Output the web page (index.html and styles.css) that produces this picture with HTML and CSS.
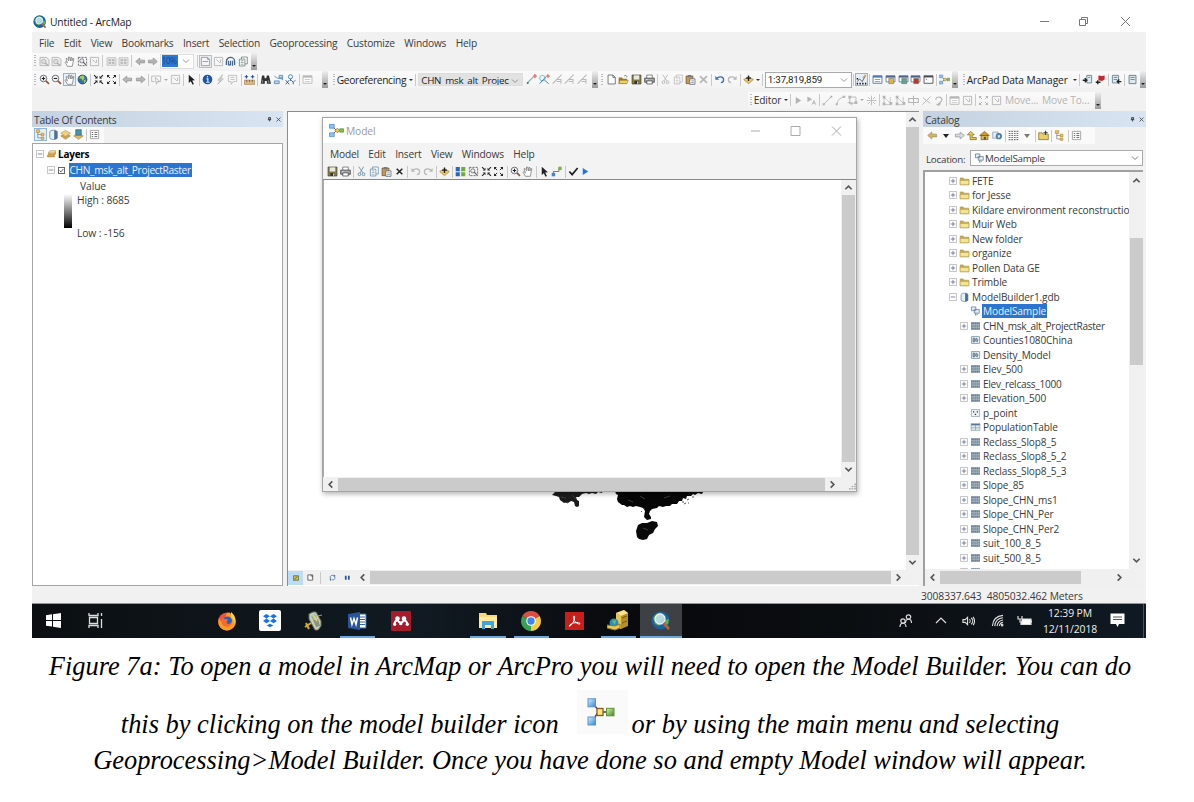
FILE: index.html
```html
<!DOCTYPE html>
<html lang="en">
<head>
<meta charset="utf-8">
<title>Untitled - ArcMap</title>
<link rel="stylesheet" href="styles.css">
</head>
<body>
<svg class="defs" xmlns="http://www.w3.org/2000/svg">
<defs>
<symbol id="zin" viewBox="0 0 16 16"><circle cx="6.500" cy="6.500" r="4.800" fill="#eef4fa" stroke="#666" stroke-width="1.300"/><path d="M4 6.500h5M6.500 4v5" stroke="#222" stroke-width="1.500"/><path d="M10 10l4.500 4.500" stroke="#8a5a44" stroke-width="2.600"/></symbol>
<symbol id="zout" viewBox="0 0 16 16"><circle cx="6.500" cy="6.500" r="4.800" fill="#eef4fa" stroke="#666" stroke-width="1.300"/><path d="M4 6.500h5" stroke="#222" stroke-width="1.500"/><path d="M10 10l4.500 4.500" stroke="#8a5a44" stroke-width="2.600"/></symbol>
<symbol id="hand" viewBox="0 0 16 16"><path d="M5 15L1.500 9l1-1L5 10 3 4l1.500-.5L7 7 6.500 1.500h1.700L9.500 7l.5-5 1.500.3L11.500 7l1.500-3.500 1.300.5L13 10l-1 5z" fill="#fff" stroke="#777" stroke-width="1.100"/></symbol>
<symbol id="globe" viewBox="0 0 16 16"><circle cx="8" cy="8" r="6.500" fill="#2c72b8" stroke="#234"/><path d="M5 3l5-1 1 4-3 4-1-3-4-1zM10 9l3-1-1 4-2 1z" fill="#a5cf52"/></symbol>
<symbol id="arin" viewBox="0 0 16 16"><path d="M1.500 1.500l3 3M14.500 1.500l-3 3M1.500 14.500l3-3M14.500 14.500l-3-3" stroke="currentColor" stroke-width="1.600"/><path d="M6.500 2.500v4h-4zM9.500 2.500v4h4zM6.500 13.500v-4h-4zM9.500 13.500v-4h4z" fill="currentColor"/></symbol>
<symbol id="arout" viewBox="0 0 16 16"><path d="M6 6L3 3M10 6l3-3M6 10l-3 3M10 10l3 3" stroke="currentColor" stroke-width="1.400"/><path d="M1.500 1.500h4l-4 4zM14.500 1.500h-4l4 4zM1.500 14.500h4l-4-4zM14.500 14.500h-4l4-4z" fill="currentColor"/></symbol>
<symbol id="left" viewBox="0 0 16 16"><path d="M1 8l6-5v3h7v4H7v3z" fill="currentColor" stroke="#888" stroke-width=".9"/></symbol>
<symbol id="right" viewBox="0 0 16 16"><path d="M15 8L9 3v3H2v4h7v3z" fill="currentColor" stroke="#888" stroke-width=".9"/></symbol>
<symbol id="self" viewBox="0 0 16 16"><path d="M1 3h13v8H9M1 3v8h4M6 5l7 6-4 .5L8 15z" fill="none" stroke="currentColor" stroke-width="1.300"/></symbol>
<symbol id="clr" viewBox="0 0 16 16"><path d="M2 2h12v12H2zM5 5l5 5M11 5v5" fill="none" stroke="currentColor" stroke-width="1.300"/></symbol>
<symbol id="ptr" viewBox="0 0 16 16"><path d="M4 1l9 8-4 .5 2.500 5-2 1-2.500-5L4 13z" fill="currentColor"/></symbol>
<symbol id="info" viewBox="0 0 16 16"><circle cx="8" cy="8" r="7" fill="#1c57a8"/><path d="M8 3v2M6.500 7H8.500v5M6 12h5" stroke="#dce9f8" stroke-width="1.700" fill="none"/></symbol>
<symbol id="bolt" viewBox="0 0 16 16"><path d="M11 1L4 9h4l-4 6 8-8H8z" fill="#ddd" stroke="#aaa"/></symbol>
<symbol id="call" viewBox="0 0 16 16"><path d="M2 2h12v9H9l-3 4v-4H2zM5 5h6M5 8h6" fill="none" stroke="currentColor" stroke-width="1.200"/></symbol>
<symbol id="meas" viewBox="0 0 16 16"><path d="M1 4h5M10 4h5" stroke="#244f94" stroke-width="1.500"/><path d="M3.500 1.500v5M12.500 1.500v5" stroke="#244f94" stroke-width="1.500"/><path d="M.5 9h15v6H.5z" fill="#dcbf92" stroke="#a07a45"/><path d="M4 9v3M8 9v3M12 9v3" stroke="#543"/></symbol>
<symbol id="bino" viewBox="0 0 16 16"><path d="M3 2h3l1 4h2l1-4h3l3 12h-6v-4H7v4H1z" fill="#333"/><path d="M4 9l-1 4M12 9l1 4" stroke="#bbb"/></symbol>
<symbol id="route" viewBox="0 0 16 16"><path d="M2 10h7v4H2zM6 6h8v3M9 2h5v4H9zM2 3l4 3" fill="#bdd7ee" stroke="#5a87b2" stroke-width="1.200"/></symbol>
<symbol id="xy" viewBox="0 0 16 16"><circle cx="8" cy="4" r="3" fill="none" stroke="#4e85bf" stroke-width="1.400"/><path d="M8 7v3M1 9l5 6M6 9l-5 6M9 9l3 3 3-3M12 12v3" fill="none" stroke="#28578f" stroke-width="1.300"/></symbol>
<symbol id="win" viewBox="0 0 16 16"><path d="M1.500 2.500h13v11h-13z" fill="#fff" stroke="currentColor" stroke-width="1.300"/><path d="M1.500 4h13" stroke="currentColor" stroke-width="2.500"/><path d="M4 8h8M4 11h8" stroke="currentColor"/></symbol>
<symbol id="page" viewBox="0 0 16 16"><path d="M3 1.500h7l3.500 3.500v9.500H3zM10 1.500V5h3.500" fill="#fff" stroke="currentColor" stroke-width="1.300"/></symbol>
<symbol id="layout" viewBox="0 0 16 16"><path d="M2 2h9l3 3v9H2zM11 2v3h3M4 8h8" fill="#f4f4f4" stroke="currentColor" stroke-width="1.300"/></symbol>
<symbol id="pagez" viewBox="0 0 16 16"><path d="M1.500 2h9l4 3v9h-13z" fill="#eee" stroke="currentColor" stroke-width="1.300"/><circle cx="7" cy="8" r="3.300" fill="#ddd" stroke="currentColor" stroke-width="1.300"/><path d="M9 10l4 4" stroke="currentColor" stroke-width="2.300"/></symbol>
<symbol id="grid4" viewBox="0 0 16 16"><path d="M1.500 2.500h13v11h-13z" fill="#eee" stroke="currentColor" stroke-width="1.100"/><path d="M4 5h3v2H4zM9 5h3v2H9zM4 9h3v2H4zM9 9h3v2H9z" fill="currentColor" stroke="currentColor"/></symbol>
<symbol id="open" viewBox="0 0 16 16"><path d="M1 5h5l1 2h6v7H1z" fill="#9b7a25"/><path d="M3 9h12l-2 5H1z" fill="#f0d264" stroke="#8a6f20" stroke-width=".8"/><path d="M9 3c2-2 4-1 4 2" stroke="#456" fill="none"/></symbol>
<symbol id="save" viewBox="0 0 16 16"><path d="M1.500 1.500h13v13h-13z" fill="#8a7c48" stroke="#454026"/><path d="M4 2h8v6H4z" fill="#e8e8e0"/><path d="M5 10h6v4.500H5z" fill="#333"/><path d="M9 11h1.500v3H9z" fill="#fff"/></symbol>
<symbol id="print" viewBox="0 0 16 16"><path d="M4 6V1.500h8V6" fill="#fff" stroke="#555"/><path d="M1 6h14v6H1z" fill="#aaa" stroke="#444" stroke-width="1.200"/><path d="M4 10h8v4.500H4z" fill="#fff" stroke="#333"/><path d="M3 8h2" stroke="#fff"/></symbol>
<symbol id="cut" viewBox="0 0 16 16"><path d="M4 1l6 9M11 1L6 10" stroke="currentColor" stroke-width="1.300"/><circle cx="5" cy="12" r="2" fill="none" stroke="currentColor" stroke-width="1.400"/><circle cx="11" cy="12" r="2" fill="none" stroke="currentColor" stroke-width="1.400"/></symbol>
<symbol id="copy" viewBox="0 0 16 16"><path d="M5 1.500h8.500v10H5z" fill="#fff" stroke="currentColor" stroke-width="1.200"/><path d="M2 4.500h8v10H2z" fill="#fff" stroke="currentColor" stroke-width="1.200"/><path d="M4 7h4M4 9.500h4M4 12h4" stroke="currentColor"/></symbol>
<symbol id="paste" viewBox="0 0 16 16"><path d="M1.500 3h10v11h-10z" fill="#c19a5b" stroke="#6c4c24"/><path d="M4 1.500h5v3H4z" fill="#777"/><path d="M7 7h7.500v8H7z" fill="#fff" stroke="#456"/><path d="M9 10h4M9 12.500h4" stroke="#678"/></symbol>
<symbol id="x" viewBox="0 0 16 16"><path d="M3 3l10 10M13 3L3 13" stroke="currentColor" stroke-width="2.600"/></symbol>
<symbol id="undo" viewBox="0 0 16 16"><path d="M2 3v5.500h5.500z" fill="currentColor"/><path d="M4 7C6 3 14 3 14 8.500c0 2.500-2 4-4 4" fill="none" stroke="currentColor" stroke-width="1.800"/></symbol>
<symbol id="redo" viewBox="0 0 16 16"><path d="M14 3v5.500H8.500z" fill="currentColor"/><path d="M12 7C10 3 2 3 2 8.500c0 2.500 2 4 4 4" fill="none" stroke="currentColor" stroke-width="1.800"/></symbol>
<symbol id="add" viewBox="0 0 16 16"><path d="M1 8l7-4 7 4-7 6z" fill="#f2c95c" stroke="#a17a24"/><path d="M8 2v8M4.500 6h7" stroke="#222" stroke-width="2"/></symbol>
<symbol id="edit" viewBox="0 0 16 16"><path d="M2 11l3-4 4 4 5-9" fill="none" stroke="#555" stroke-width="1.300"/><path d="M10 6l4-5" stroke="#d7a93b" stroke-width="2"/><path d="M1 14h2M5 14h2M9 14h2M13 14h2M1 7h2" stroke="#111" stroke-width="2.200"/></symbol>
<symbol id="mb" viewBox="0 0 16 16"><path d="M4 4l4 4-4 4M8 8h5" stroke="#555" fill="none"/><path d="M.5 1.500h5v4h-5zM.5 10.500h5v4h-5z" fill="#8fc1f2" stroke="#5f9bd3"/><path d="M9 5.500L11 8l-2 2.500L6.500 8z" fill="#f3cf4d" stroke="#93752a" stroke-width=".8"/><path d="M11.500 6.200h4v3.500h-4z" fill="#87bd54" stroke="#6a9f45"/></symbol>
<symbol id="wint" viewBox="0 0 16 16"><path d="M1.500 2.500h13v9h-13z" fill="#fff" stroke="#5e7394" stroke-width="1.200"/><path d="M1.500 4h13" stroke="#4c6387" stroke-width="2.500"/><path d="M5.500 6.500h7v7.500h-7z" fill="currentColor" stroke="#666" stroke-width=".8"/></symbol>
<symbol id="wincmd" viewBox="0 0 16 16"><path d="M1.500 2.500h13v11h-13z" fill="#fff" stroke="#444" stroke-width="1.200"/><path d="M1.500 4h13" stroke="#444" stroke-width="2"/><path d="M4 7l2 1.500" stroke="#444"/></symbol>
<symbol id="tri" viewBox="0 0 16 16"><path d="M4 3l8 5-8 5z" fill="currentColor"/></symbol>
<symbol id="tria" viewBox="0 0 16 16"><path d="M2 2l7 4-7 4z" fill="currentColor"/><path d="M9 14l2.500-6 2.500 6M10 12h3" fill="none" stroke="currentColor" stroke-width="1.300"/></symbol>
<symbol id="line" viewBox="0 0 16 16"><path d="M2 14L14 2" stroke="currentColor" stroke-width="1.300"/><path d="M1 12h3v3H1zM12 1h3v3h-3z" fill="currentColor"/></symbol>
<symbol id="curve" viewBox="0 0 16 16"><path d="M3 14C3 8 7 4 13 3" fill="none" stroke="currentColor" stroke-width="1.300"/><path d="M1 12h3v3H1zM11 1h4v3h-4z" fill="currentColor"/></symbol>
<symbol id="poly" viewBox="0 0 16 16"><path d="M4 3h9v8l-9 2zM1 11h6v4" fill="none" stroke="currentColor" stroke-width="1.300"/><path d="M2 1h4v4H2zM11 9h4v4h-4z" fill="currentColor"/></symbol>
<symbol id="spark" viewBox="0 0 16 16"><path d="M8 1v14M1 8h14M3 3l3 3M13 3l-3 3M3 13l3-3M13 13l-3-3" stroke="currentColor" stroke-width="1.200"/></symbol>
<symbol id="nodes" viewBox="0 0 16 16"><path d="M3 2v12h11M3 3l9 9V3" fill="none" stroke="currentColor"/><path d="M1 1h4v4H1zM1 11h4v4H1zM11 10h4v4h-4z" fill="currentColor"/></symbol>
<symbol id="cross" viewBox="0 0 16 16"><path d="M8 1v14M1 5h14v6H1z" fill="none" stroke="currentColor" stroke-width="1.500"/></symbol>
<symbol id="xthin" viewBox="0 0 16 16"><path d="M2 14L14 2M3 4l10 8" stroke="currentColor" stroke-width="1.300"/></symbol>
<symbol id="rot" viewBox="0 0 16 16"><path d="M4 7c0-6 9-5 9 0 0 4-5 3-5 7M5 13l3 2 3-3" fill="none" stroke="currentColor" stroke-width="1.700"/></symbol>
<symbol id="ref" viewBox="0 0 16 16"><path d="M4 12C0 5 6 1 11 4M12 4c4 6 0 11-5 9" fill="none" stroke="currentColor" stroke-width="1.800"/><path d="M11 1v6l4-3zM5 10v6l-4-3z" fill="currentColor"/></symbol>
<symbol id="home2" viewBox="0 0 16 16"><path d="M2 13V8c0-8 12-8 12 0v5M5 7v6h3V7M11 7v7" fill="none" stroke="currentColor" stroke-width="1.900"/></symbol>
<symbol id="ctrl" viewBox="0 0 16 16"><path d="M2 13L11 4" stroke="#5fb093" stroke-width="1.500"/><circle cx="2.500" cy="13" r="1.500" fill="#2a8459"/><path d="M13 0v6M10 3h6" stroke="#dc5b53" stroke-width="1.600"/></symbol>
<symbol id="ctrl2" viewBox="0 0 16 16"><circle cx="5" cy="6" r="4" fill="none" stroke="#6bb3da" stroke-width="1.300"/><path d="M1 14L10 4M8 9l6 5" stroke="#477dad" stroke-width="1.400"/><path d="M13 0v6M10 3h6" stroke="#dc5b53" stroke-width="1.400"/></symbol>
<symbol id="lnk" viewBox="0 0 16 16"><path d="M1 14L14 1M6 8h7v6M7 11h5" fill="none" stroke="currentColor" stroke-width="1.500"/></symbol>
<symbol id="dev" viewBox="0 0 16 16"><path d="M7 2h7v11H7z" fill="#dce9ef" stroke="#688392" stroke-width="1.300"/><path d="M9 5h3" stroke="#486372"/><path d="M1 9h6M4 6l3 3-3 3" stroke="#222" stroke-width="2" fill="none"/></symbol>
<symbol id="devd" viewBox="0 0 16 16"><path d="M2 2h9v11H2z" fill="#dce9ef" stroke="#688392" stroke-width="1.300"/><path d="M4 5h5M4 8h5" stroke="#486372"/><path d="M15 11H9M12 8l-3 3 3 3" stroke="#222" stroke-width="1.800" fill="none"/></symbol>
<symbol id="devr" viewBox="0 0 16 16"><path d="M5 2l5 1 4-1v6l-4 2-5-1z" fill="#c8272c"/><path d="M1 12h7M4 9v6" stroke="#222" stroke-width="2"/></symbol>
<symbol id="dev1" viewBox="0 0 16 16"><path d="M3 2h10v12H3z" fill="#dce9ef" stroke="#688392" stroke-width="1.400"/><path d="M5 5h6M5 8h6" stroke="#486372"/></symbol>
<symbol id="tree" viewBox="0 0 16 16"><path d="M4 4v9h6M4 8h6" stroke="#777" fill="none"/><path d="M2 1h5v4H2zM9 6h4v4H9zM9 12h4v3H9z" fill="#eac15a" stroke="#a5802b" stroke-width=".8"/></symbol>
<symbol id="cyl" viewBox="0 0 16 16"><path d="M2.500 4c1-3 10-3 11 0v9c-1 3-10 3-11 0z" fill="#e8f1f8" stroke="#6d88a6" stroke-width="1.200"/><path d="M9 2c3 0 4.500 1 4.500 2v9c0 1-2 2-4.500 2z" fill="#4a6f9a"/></symbol>
<symbol id="layer" viewBox="0 0 16 16"><path d="M1 10l7-4 7 4-7 5z" fill="#cfa75c" stroke="#8f6c2e" stroke-width=".7"/><path d="M1 6l7-4 7 4-7 5z" fill="#f5d07b" stroke="#a47e37" stroke-width=".7"/></symbol>
<symbol id="layers" viewBox="0 0 18 16"><path d="M2 11l3-4h12l-3 4v3H2z" fill="#dba64e" stroke="#a87a30"/><path d="M3 7l3-4h11l-3 4zM3 9h11l3-4" fill="#f9e2a0" stroke="#b08638"/></symbol>
<symbol id="lsel" viewBox="0 0 16 16"><path d="M1 10l7-4 7 4-7 5z" fill="#e0b963" stroke="#8f6c2e" stroke-width=".7"/><path d="M4 1h8v8H4z" fill="#4a93a8" stroke="#345d84"/></symbol>
<symbol id="opts" viewBox="0 0 16 16"><path d="M2 2h12v12H2z" fill="#fff" stroke="#999" stroke-width="1.200"/><path d="M4 5h2M8 5h4M4 8h2M8 8h4M4 11h2M8 11h4" stroke="#666" stroke-width="1.400"/></symbol>
<symbol id="up" viewBox="0 0 16 16"><path d="M6 14V7H2l5-5 5 5H9v4h6v3z" fill="#f0cc57" stroke="#6d5b23"/></symbol>
<symbol id="home" viewBox="0 0 16 16"><path d="M3 8h10v6H3z" fill="#e0b54a" stroke="#6d5b23"/><path d="M1 8l7-6 7 6z" fill="#d29a2d" stroke="#6d5b23"/><path d="M7 10h3v4H7z" fill="#554"/></symbol>
<symbol id="conn" viewBox="0 0 16 16"><path d="M1 3h8v9H1z" fill="#e4ebf1" stroke="#8192a2"/><circle cx="10" cy="9" r="4.500" fill="#4b7da8"/><path d="M8 8l3-1 1 3-3 2z" fill="#dde6c0"/></symbol>
<symbol id="dots" viewBox="0 0 16 16"><path d="M1 2h14M1 5h14M1 8h14M1 11h14M1 14h14" stroke="#777" stroke-width="1.500" stroke-dasharray="2.500 1.300"/></symbol>
<symbol id="folder" viewBox="0 0 16 16"><path d="M1 3h5l1 2h8v9H1z" fill="#c6ab4b" stroke="#a6914b" stroke-width=".8"/><path d="M1 7h14v7H1z" fill="#f4e391" stroke="#a6914b" stroke-width=".8"/></symbol>
<symbol id="fold2" viewBox="0 0 16 16"><path d="M1 4h5l1 2h8v8H1z" fill="#e9cf69" stroke="#7e6b29"/><path d="M11 1v6M8 4h6" stroke="#333" stroke-width="1.500"/></symbol>
<symbol id="raster" viewBox="0 0 16 16"><path d="M1 2h14v12H1z" fill="#5e7184"/><path d="M1 5.500h14M1 8h14M1 10.500h14M4 2v12M7 2v12M10 2v12M13 2v12" stroke="#c5d0da" stroke-width=".8"/></symbol>
<symbol id="fc" viewBox="0 0 16 16"><path d="M1.500 2.500h13v11h-13z" fill="#edf2f6" stroke="#7f92a3" stroke-width="1.300"/><path d="M4 5h3v6H4zM9 5l3 2-1 4-3-2z" fill="#9eb2c2" stroke="#455d72"/></symbol>
<symbol id="pt" viewBox="0 0 16 16"><path d="M1.500 2.500h13v11h-13z" fill="#edf2f6" stroke="#8c9dac" stroke-width="1.200"/><path d="M4 5h2v2H4zM10 5h2v2h-2zM7 9h2v2H7z" fill="#234"/></symbol>
<symbol id="tbl" viewBox="0 0 16 16"><path d="M1 2.500h14v11H1zM1 6h14M1 8.500h14M1 11h14M8 5v8" fill="#fff" stroke="#7893ac"/><path d="M1 3h14v2H1z" fill="#587895"/></symbol>
<symbol id="ms" viewBox="0 0 16 16"><path d="M1.500 1.500h7v6h-7zM6 5.500h8v6H6z" fill="#e5edf4" stroke="#5e7a97" stroke-width="1.200"/><path d="M8 11v4l4-2" fill="none" stroke="#5e7a97"/></symbol>
<symbol id="auto" viewBox="0 0 16 16"><path d="M1 1.500h6v6H1zM1 9h6v6H1z" fill="#2467bd"/><path d="M9 1.500h6v6H9zM9 9h6v6H9z" fill="#6cad37"/></symbol>
<symbol id="fitw" viewBox="0 0 16 16"><path d="M2 2h12v12H2z" fill="none" stroke="#555" stroke-width="1.200" stroke-dasharray="3 1.500"/><circle cx="7" cy="7" r="3" fill="#e5eef7" stroke="#555"/><path d="M9 9l4 4" stroke="#555" stroke-width="1.600"/></symbol>
<symbol id="cn" viewBox="0 0 16 16"><path d="M3.500 12V8h8V4" fill="none" stroke="#666" stroke-width="1.200"/><path d="M1 10h5v5H1z" fill="#3f82cf"/><path d="M10.500 1h5v5h-5z" fill="#79b343"/></symbol>
<symbol id="chk" viewBox="0 0 16 16"><path d="M2 8l4 4.500L14 3" fill="none" stroke="currentColor" stroke-width="2.500"/></symbol>
<symbol id="chev" viewBox="0 0 16 16"><path d="M2 5l6 6 6-6" fill="none" stroke="currentColor" stroke-width="1.500"/></symbol>
<symbol id="au" viewBox="0 0 10 10"><path d="M1.500 7L5 3.500 8.500 7" fill="none" stroke="#555" stroke-width="1.800"/></symbol>
<symbol id="ad" viewBox="0 0 10 10"><path d="M1.500 3L5 6.500 8.500 3" fill="none" stroke="#555" stroke-width="1.800"/></symbol>
<symbol id="al" viewBox="0 0 10 10"><path d="M7 1.500L3.500 5 7 8.500" fill="none" stroke="#555" stroke-width="1.800"/></symbol>
<symbol id="ar" viewBox="0 0 10 10"><path d="M3 1.500L6.500 5 3 8.500" fill="none" stroke="#555" stroke-width="1.800"/></symbol>
<symbol id="pin" viewBox="0 0 10 10"><path d="M3 1h4v4H3zM1.500 5.500h7M5 5.500V9M6 1v4" fill="none" stroke="#333" stroke-width="1.500"/></symbol>
<symbol id="cls" viewBox="0 0 10 10"><path d="M1 1l8 8M9 1L1 9" stroke="currentColor" stroke-width="1.500"/></symbol>
<symbol id="plus" viewBox="0 0 9 9"><path d="M.5.500h8v8h-8z" fill="#fff" stroke="#bbb"/><path d="M2 4.500h5M4.500 2v5" stroke="#5c6c90" stroke-width=".9"/></symbol>
<symbol id="minus" viewBox="0 0 9 9"><path d="M.5.500h8v8h-8z" fill="#fff" stroke="#bbb"/><path d="M2 4.500h5" stroke="#5c6c90" stroke-width=".9"/></symbol>
<symbol id="arcmap" viewBox="0 0 20 20"><circle cx="9.500" cy="9.500" r="9" fill="#1f609c"/><path d="M2 7c3-5 6-6 9-5l4 4-5 3-2 6-4-2z" fill="#57a34c"/><path d="M14 9l4-1-1 5-3 2z" fill="#67ae45"/><circle cx="9" cy="8" r="5" fill="#c8e5f4" fill-opacity=".85" stroke="#e8f0f5" stroke-width="1.300"/><path d="M12.500 12l5.500 6" stroke="#a86a3c" stroke-width="2.600"/></symbol>
</defs>
</svg>

<main class="desktop">
  <section class="arcmap">
    <header class="titlebar">
      <svg class="appicon"><use href="#arcmap"/></svg>
      <span class="title">Untitled - ArcMap</span>
      <svg class="winctl" viewBox="0 0 92 12"><path d="M1 5.500h9M40.500 3.500h6v6h-6zM42.500 3.500v-2h6v6h-2M82 1l9 9M91 1l-9 9" fill="none" stroke="#777"/></svg>
    </header>
    <nav class="menubar"><span>File</span><span>Edit</span><span>View</span><span>Bookmarks</span><span>Insert</span><span>Selection</span><span>Geoprocessing</span><span>Customize</span><span>Windows</span><span>Help</span></nav>

    <div class="toolrow row-layout">
      <div class="toolbar dim tb-layout">
        <i class="grip"></i>
        <svg class="ic"><use href="#pagez"/></svg><svg class="ic"><use href="#pagez"/></svg><svg class="ic"><use href="#hand"/></svg><svg class="ic"><use href="#fitw"/></svg><svg class="ic"><use href="#clr"/></svg><i class="sep"></i>
        <svg class="ic"><use href="#grid4"/></svg><svg class="ic"><use href="#grid4"/></svg><i class="sep"></i>
        <svg class="ic"><use href="#left"/></svg><svg class="ic"><use href="#right"/></svg>
        <span class="zoombox"><b>10%</b><svg><use href="#chev"/></svg></span><i class="sep"></i>
        <span class="pressed"><svg class="ic"><use href="#layout"/></svg></span><svg class="ic"><use href="#clr"/></svg><svg class="ic navy"><use href="#home2"/></svg><svg class="ic green"><use href="#copy"/></svg>
      </div><i class="more"></i>
    </div>

    <div class="toolrow row-main">
      <div class="toolbar tb-tools">
        <i class="grip"></i>
        <svg class="ic"><use href="#zin"/></svg><svg class="ic"><use href="#zout"/></svg><span class="pressed"><svg class="ic"><use href="#hand"/></svg></span><svg class="ic"><use href="#globe"/></svg><i class="sep"></i>
        <svg class="ic"><use href="#arin"/></svg><svg class="ic"><use href="#arout"/></svg><i class="sep"></i>
        <svg class="ic gray"><use href="#left"/></svg><svg class="ic gray"><use href="#right"/></svg><i class="sep"></i>
        <svg class="ic gray"><use href="#self"/></svg><i class="dd gray"></i><svg class="ic gray"><use href="#clr"/></svg><i class="sep"></i>
        <svg class="ic"><use href="#ptr"/></svg><i class="sep"></i>
        <svg class="ic"><use href="#info"/></svg><svg class="ic"><use href="#bolt"/></svg><svg class="ic gray"><use href="#call"/></svg><i class="sep"></i>
        <svg class="ic"><use href="#meas"/></svg><i class="sep"></i>
        <svg class="ic"><use href="#bino"/></svg><svg class="ic"><use href="#route"/></svg><svg class="ic"><use href="#xy"/></svg><i class="sep"></i>
        <svg class="ic gray"><use href="#win"/></svg>
      </div><i class="more"></i>
      <div class="toolbar tb-georef">
        <i class="grip"></i><span class="tlabel georef">Georeferencing</span><i class="dd"></i><i class="sep"></i>
        <span class="layerbox"><b>CHN_msk_alt_Projec</b><svg><use href="#chev"/></svg></span>
        <svg class="ic"><use href="#ctrl"/></svg><svg class="ic"><use href="#ctrl2"/></svg><svg class="ic gray"><use href="#lnk"/></svg><svg class="ic gray"><use href="#lnk"/></svg><svg class="ic gray"><use href="#lnk"/></svg>
      </div><i class="more"></i>
      <div class="toolbar tb-standard">
        <i class="grip"></i>
        <svg class="ic slate"><use href="#page"/></svg><svg class="ic"><use href="#open"/></svg><svg class="ic"><use href="#save"/></svg><svg class="ic"><use href="#print"/></svg><i class="sep"></i>
        <svg class="ic gray"><use href="#cut"/></svg><svg class="ic gray"><use href="#copy"/></svg><svg class="ic"><use href="#paste"/></svg><svg class="ic gray"><use href="#x"/></svg><i class="sep"></i>
        <svg class="ic blue"><use href="#undo"/></svg><svg class="ic gray"><use href="#redo"/></svg><i class="sep"></i>
        <svg class="ic"><use href="#add"/></svg><i class="dd"></i><i class="sep"></i>
        <span class="scalebox"><b>1:37,819,859</b><svg><use href="#chev"/></svg></span><i class="sep"></i>
        <span class="pressed"><svg class="ic"><use href="#edit"/></svg></span><i class="sep"></i>
        <svg class="ic royal"><use href="#win"/></svg><svg class="ic gold"><use href="#wint"/></svg><svg class="ic teal"><use href="#wint"/></svg><svg class="ic red"><use href="#wint"/></svg><svg class="ic"><use href="#wincmd"/></svg><i class="sep"></i>
        <svg class="ic"><use href="#mb"/></svg>
      </div><i class="more"></i>
      <div class="toolbar tb-arcpad">
        <i class="grip"></i><span class="tlabel arcpad">ArcPad Data Manager</span><i class="dd"></i><i class="sep"></i>
        <svg class="ic"><use href="#dev"/></svg><svg class="ic"><use href="#devr"/></svg><i class="sep"></i><svg class="ic"><use href="#devd"/></svg><i class="sep"></i><svg class="ic"><use href="#dev1"/></svg>
      </div><i class="more"></i>
    </div>

    <div class="toolrow row-editor">
      <div class="toolbar dim tb-editor">
        <i class="grip"></i><span class="tlabel editor">Editor</span><i class="dd dark"></i><i class="sep"></i>
        <svg class="ic"><use href="#tri"/></svg><svg class="ic"><use href="#tria"/></svg><i class="sep"></i>
        <svg class="ic"><use href="#line"/></svg><svg class="ic"><use href="#curve"/></svg><svg class="ic"><use href="#poly"/></svg><i class="dd"></i><svg class="ic"><use href="#spark"/></svg><i class="sep"></i>
        <svg class="ic"><use href="#nodes"/></svg><svg class="ic"><use href="#nodes"/></svg><svg class="ic"><use href="#cross"/></svg><svg class="ic"><use href="#xthin"/></svg><svg class="ic"><use href="#rot"/></svg><i class="sep"></i>
        <svg class="ic"><use href="#win"/></svg><svg class="ic"><use href="#clr"/></svg><i class="sep"></i>
        <svg class="ic"><use href="#arout"/></svg><svg class="ic"><use href="#clr"/></svg>
        <span class="tlabel move">Move...</span><span class="tlabel moveto">Move To...</span>
      </div><i class="more"></i>
    </div>

    <div class="workspace">
      <aside class="toc">
        <div class="panelhead"><span class="toctitle">Table Of Contents</span><svg><use href="#pin"/></svg><svg><use href="#cls"/></svg></div>
        <div class="toctools"><span class="pressed"><svg class="ic"><use href="#tree"/></svg></span><svg class="ic"><use href="#cyl"/></svg><svg class="ic"><use href="#layer"/></svg><svg class="ic"><use href="#lsel"/></svg><i class="sep"></i><svg class="ic"><use href="#opts"/></svg></div>
        <div class="toclist">
          <div class="trow"><svg class="box"><use href="#minus"/></svg><svg class="lay"><use href="#layers"/></svg><strong>Layers</strong></div>
          <div class="trow raster"><svg class="box"><use href="#minus"/></svg><span class="check"><svg><use href="#chk"/></svg></span><span class="sel">CHN_msk_alt_ProjectRaster</span></div>
          <div class="trow value">Value</div>
          <div class="legend"><i class="ramp"></i><div class="range"><span>High : 8685</span><span>Low : -156</span></div></div>
        </div>
      </aside>

      <section class="map">
        <div class="mapmain">
          <svg class="land" viewBox="288 112 618 458" width="618" height="458">
            <path d="M552 495l3-3 1-2 15 0 5 2 4-1 4 1 5-1 3 1 5-1 6 0-1 2-4-1-2 2-4-1-3 1-3-1-4 1-3 3-3 0 1 3 2 1 0 5-2 1-2-1-1-4-3-1-3 2-1-1-3 1-4-3-1-3-3-1z" fill="#1b1b1b"/>
            <path d="M612 490h96l-2 2-3 0-1 2-4-1-3 2-2-1-2 2-4 0-1 3-3-1-1 3-3 0-2 3-5 0-2 2-4 0-3 1-4-1-2 2-5 1-2 2-1 3 2 3 0 2-4 1-3-3 1-6-2-3-3-1-4-1-3 1-3-1-3 1-3-2-2 0-4-3-1-3 1-4-2-1-1-3-4-1z" fill="#060606"/>
            <path d="M638 525l4-2 5 0 5-2 5 1 1 4-3 3-2 4-4 2-2 4-4 1-4-1-2-2-1-6z" fill="#090909"/>
            <path d="M682 502h2M687 500l2-1M684 504l2-1M692 497h2M688 503h1M641 511l1 1M644 509h1" stroke="#555" fill="none"/>
            <path d="M561 497l5 1M572 495l4 4M565 502l3 1M640 496l5 3M664 498l6-2M628 500l5 2M643 528l5 2" stroke="#3a3a3a" fill="none"/>
          </svg>
          <div class="vscroll"><svg><use href="#au"/></svg><i></i><svg><use href="#ad"/></svg></div>
        </div>
        <div class="mapfoot"><span class="viewon"><svg viewBox="0 0 16 16"><path d="M1 2h14v12H1z" fill="#c9bd55" stroke="#55683c" stroke-width="2"/><path d="M3 12l9-8" stroke="#55683c" stroke-width="2"/></svg></span><svg class="pg" viewBox="0 0 16 16"><path d="M2 2h11v12H2z" fill="#fff" stroke="#555" stroke-width="2"/><path d="M8 4h4v4" fill="none" stroke="#555" stroke-width="2"/></svg><i class="sep"></i><svg class="blue rf"><use href="#ref"/></svg><svg class="ps" viewBox="0 0 16 16"><path d="M4 4v9M11 4v9" stroke="#2b55a4" stroke-width="4"/></svg><svg class="arr"><use href="#al"/></svg><i class="thumb"></i><svg class="arr"><use href="#ar"/></svg></div>

        <div class="modelwin">
          <div class="modeltitle"><svg class="mi"><use href="#mb"/></svg><span>Model</span><svg class="winctl" viewBox="0 0 92 12"><path d="M1 6h9M41 1.500h9v9h-9zM82 1.500l9 9M91 1.500l-9 9" fill="none" stroke="#aaa"/></svg></div>
          <nav class="modelmenu"><span>Model</span><span>Edit</span><span>Insert</span><span>View</span><span>Windows</span><span>Help</span></nav>
          <div class="modeltools">
            <svg class="ic"><use href="#save"/></svg><svg class="ic"><use href="#print"/></svg><i class="sep"></i><svg class="ic steel"><use href="#cut"/></svg><svg class="ic steel"><use href="#copy"/></svg><svg class="ic"><use href="#paste"/></svg><svg class="ic small"><use href="#x"/></svg><i class="sep"></i><svg class="ic gray"><use href="#undo"/></svg><svg class="ic gray"><use href="#redo"/></svg><i class="sep"></i><svg class="ic"><use href="#add"/></svg><i class="sep"></i><svg class="ic"><use href="#auto"/></svg><svg class="ic"><use href="#fitw"/></svg><svg class="ic"><use href="#arin"/></svg><svg class="ic"><use href="#arout"/></svg><i class="sep"></i><svg class="ic"><use href="#zin"/></svg><svg class="ic"><use href="#hand"/></svg><i class="sep"></i><svg class="ic"><use href="#ptr"/></svg><svg class="ic"><use href="#cn"/></svg><i class="sep"></i><svg class="ic"><use href="#chk"/></svg><svg class="ic azure"><use href="#tri"/></svg>
          </div>
          <div class="modelbody"><div class="canvas"></div><div class="vscroll"><svg><use href="#au"/></svg><i></i><svg><use href="#ad"/></svg></div></div>
          <div class="modelfoot"><svg class="arr"><use href="#al"/></svg><i class="thumb"></i><svg class="arr"><use href="#ar"/></svg><svg class="resize" viewBox="0 0 8 8"><path d="M6 1.500h2M3 4h2M6 4h2M0 6.500h2M3 6.500h2M6 6.500h2" stroke="#b0b0b0" stroke-width="1.600"/></svg></div>
        </div>
      </section>

      <aside class="catalog">
        <div class="panelhead"><span class="cattitle">Catalog</span><svg><use href="#pin"/></svg><svg><use href="#cls"/></svg></div>
        <div class="cattools"><svg class="ic gold"><use href="#left"/></svg><i class="bigdd"></i><svg class="ic silver"><use href="#right"/></svg><svg class="ic"><use href="#up"/></svg><svg class="ic"><use href="#home"/></svg><svg class="ic"><use href="#conn"/></svg><i class="sep"></i><svg class="ic"><use href="#dots"/></svg><i class="bigdd gr"></i><i class="sep"></i><svg class="ic"><use href="#fold2"/></svg><i class="sep"></i><svg class="ic"><use href="#tree"/></svg><i class="sep"></i><svg class="ic"><use href="#opts"/></svg></div>
        <div class="location"><span class="loclabel">Location:</span><span class="locbox"><svg class="ti"><use href="#ms"/></svg><b>ModelSample</b><svg class="cv"><use href="#chev"/></svg></span></div>
        <div class="treewrap">
          <div class="treemain">
            <ul class="tree">
              <li><svg class="box"><use href="#plus"/></svg><svg class="ti"><use href="#folder"/></svg><span>FETE</span></li>
              <li><svg class="box"><use href="#plus"/></svg><svg class="ti"><use href="#folder"/></svg><span>for Jesse</span></li>
              <li><svg class="box"><use href="#plus"/></svg><svg class="ti"><use href="#folder"/></svg><span>Kildare environment reconstruction</span></li>
              <li><svg class="box"><use href="#plus"/></svg><svg class="ti"><use href="#folder"/></svg><span>Muir Web</span></li>
              <li><svg class="box"><use href="#plus"/></svg><svg class="ti"><use href="#folder"/></svg><span>New folder</span></li>
              <li><svg class="box"><use href="#plus"/></svg><svg class="ti"><use href="#folder"/></svg><span>organize</span></li>
              <li><svg class="box"><use href="#plus"/></svg><svg class="ti"><use href="#folder"/></svg><span>Pollen Data GE</span></li>
              <li><svg class="box"><use href="#plus"/></svg><svg class="ti"><use href="#folder"/></svg><span>Trimble</span></li>
              <li><svg class="box"><use href="#minus"/></svg><svg class="ti"><use href="#cyl"/></svg><span>ModelBuilder1.gdb</span></li>
              <li class="kid leaf"><svg class="ti"><use href="#ms"/></svg><span class="sel">ModelSample</span></li>
              <li class="kid"><svg class="box"><use href="#plus"/></svg><svg class="ti"><use href="#raster"/></svg><span class="tight">CHN_msk_alt_ProjectRaster</span></li>
              <li class="kid leaf"><svg class="ti"><use href="#fc"/></svg><span>Counties1080China</span></li>
              <li class="kid leaf"><svg class="ti"><use href="#fc"/></svg><span>Density_Model</span></li>
              <li class="kid"><svg class="box"><use href="#plus"/></svg><svg class="ti"><use href="#raster"/></svg><span>Elev_500</span></li>
              <li class="kid"><svg class="box"><use href="#plus"/></svg><svg class="ti"><use href="#raster"/></svg><span class="tight">Elev_relcass_1000</span></li>
              <li class="kid"><svg class="box"><use href="#plus"/></svg><svg class="ti"><use href="#raster"/></svg><span>Elevation_500</span></li>
              <li class="kid leaf"><svg class="ti"><use href="#pt"/></svg><span>p_point</span></li>
              <li class="kid leaf"><svg class="ti"><use href="#tbl"/></svg><span>PopulationTable</span></li>
              <li class="kid"><svg class="box"><use href="#plus"/></svg><svg class="ti"><use href="#raster"/></svg><span>Reclass_Slop8_5</span></li>
              <li class="kid"><svg class="box"><use href="#plus"/></svg><svg class="ti"><use href="#raster"/></svg><span>Reclass_Slop8_5_2</span></li>
              <li class="kid"><svg class="box"><use href="#plus"/></svg><svg class="ti"><use href="#raster"/></svg><span>Reclass_Slop8_5_3</span></li>
              <li class="kid"><svg class="box"><use href="#plus"/></svg><svg class="ti"><use href="#raster"/></svg><span>Slope_85</span></li>
              <li class="kid"><svg class="box"><use href="#plus"/></svg><svg class="ti"><use href="#raster"/></svg><span>Slope_CHN_ms1</span></li>
              <li class="kid"><svg class="box"><use href="#plus"/></svg><svg class="ti"><use href="#raster"/></svg><span>Slope_CHN_Per</span></li>
              <li class="kid"><svg class="box"><use href="#plus"/></svg><svg class="ti"><use href="#raster"/></svg><span>Slope_CHN_Per2</span></li>
              <li class="kid"><svg class="box"><use href="#plus"/></svg><svg class="ti"><use href="#raster"/></svg><span>suit_100_8_5</span></li>
              <li class="kid"><svg class="box"><use href="#plus"/></svg><svg class="ti"><use href="#raster"/></svg><span>suit_500_8_5</span></li>
              <li class="kid"><svg class="box"><use href="#plus"/></svg><svg class="ti"><use href="#raster"/></svg></li>
            </ul>
            <div class="vscroll"><svg><use href="#au"/></svg><i></i><svg><use href="#ad"/></svg></div>
          </div>
          <div class="treefoot"><svg class="arr"><use href="#al"/></svg><i class="thumb"></i><svg class="arr"><use href="#ar"/></svg></div>
        </div>
      </aside>
    </div>
    <div class="statusbar"><span>3008337.643&nbsp; 4805032.462 Meters</span></div>
  </section>

  <footer class="taskbar">
    <span class="task"><svg width="15" height="15" viewBox="0 0 15 15"><path d="M0 2.200l6-.9v5.700H0zM7 1.200L15 0v7H7zM0 8h6v5.600l-6-.9zM7 8h8v7l-8-1.200z" fill="#fff"/></svg></span>
    <span class="task"><svg width="16" height="15" viewBox="0 0 16 15"><path d="M1 0v2.500h9V0M1 15v-2.500h9V15M1.500 4.500h8v6h-8zM13.500 0v3M13.500 6v9" fill="none" stroke="#ddd" stroke-width="1.300"/></svg></span>
    <span class="task"></span><span class="task"></span>
    <span class="task"><svg width="20" height="20" viewBox="0 0 20 20"><circle cx="10" cy="10.500" r="9" fill="#f0523d"/><path d="M10 2c4-2 3 2 6 3 5 6 2 14-6 14.500C3 19 0 13 2 7c1 3 2 3 3 3 2 0 3-2 3-3z" fill="#ff9b22"/><circle cx="10.500" cy="10" r="4.500" fill="#275fc2"/><path d="M5 7c3 0 3 2 6 1-1 3-2 4 0 5 2 0 3-1 4-3 0 5-4 7-8 5-3-2-3-5-2-8z" fill="#f26a2e"/><path d="M14 1c4 3 5 7 4 12-1-4-2-5-4-7z" fill="#ffd240"/></svg></span>
    <span class="task"><svg width="22" height="21" viewBox="0 0 22 21"><rect width="22" height="21" rx="2" fill="#fff"/><path d="M7.500 4l3.500 2.300-3.500 2.300L4 6.300zM14.500 4L18 6.300l-3.500 2.300L11 6.300zM7.500 8.600l3.500 2.300-3.500 2.300L4 10.900zM14.500 8.600l3.500 2.300-3.500 2.300-3.500-2.300zM11 13.700l3.300 1.700L11 17.300l-3.300-1.900z" fill="#1672ec"/></svg></span>
    <span class="task"><svg width="20" height="20" viewBox="0 0 20 20"><path d="M5 3l4-2h3l5 9 0 5-3 4h-3L5 8z" fill="#c9ccb8" stroke="#68705d"/><path d="M7 5l4-2 2 4-4 2z" fill="#82b8a0"/><path d="M9 9l5-1 2 7-4 1z" fill="#8a917c"/><path d="M9 4l4 6" stroke="#e8d76e" stroke-width="1.500"/><path d="M1 16l6-4M2 12l3 6" stroke="#d4ae2b" stroke-width="2"/><path d="M14 5l4-1" stroke="#c69c28"/></svg></span>
    <span class="task run"><svg width="19" height="18" viewBox="0 0 19 18"><path d="M10 2h8v14h-8z" fill="#fff" stroke="#3263a8"/><path d="M11 5h6M11 7.500h6M11 10h6M11 12.500h6" stroke="#3263a8"/><path d="M0 2l12-2v18L0 16z" fill="#2a5699"/><path d="M2.500 5.500l1.500 7 2-6 2 6 1.500-7" fill="none" stroke="#fff" stroke-width="1.500"/></svg></span>
    <span class="task"><svg width="20" height="20" viewBox="0 0 20 20"><rect width="20" height="20" rx="1" fill="#a51d2d"/><circle cx="6.500" cy="7.500" r="2.300" fill="#fff"/><circle cx="13" cy="7.500" r="2.300" fill="#fff"/><path d="M3.500 13.500c0-3 1.500-4 3-4.500 1 2 2 2.500 3.300 2.500S12 11 13 9c1.500.5 3 1.500 3.500 4.500" fill="none" stroke="#fff" stroke-width="2"/><circle cx="3.700" cy="13.300" r="1.600" fill="#fff"/><circle cx="9.800" cy="12.700" r="1.600" fill="#fff"/><circle cx="16.300" cy="13.300" r="1.600" fill="#fff"/></svg></span>
    <span class="task"></span>
    <span class="task run"><svg width="20" height="18" viewBox="0 0 20 18"><path d="M1 1h7l1 2h10v13H1z" fill="#f7d978"/><path d="M1 5h18v11H1z" fill="#ffe9a0"/><path d="M4 9h12v8h-3v-4H7v4H4z" fill="#41a5dc"/></svg></span>
    <span class="task run"><svg width="20" height="20" viewBox="0 0 20 20"><path d="M10 10L1.340 5A10 10 0 0 1 18.660 5z" fill="#d94f43"/><path d="M10 10L18.660 5A10 10 0 0 1 10 20z" fill="#f6cc3a"/><path d="M10 10v10A10 10 0 0 1 1.340 5z" fill="#35a257"/><circle cx="10" cy="10" r="4.800" fill="#fff"/><circle cx="10" cy="10" r="3.700" fill="#4284ee"/></svg></span>
    <span class="task"><svg width="19" height="18" viewBox="0 0 19 18"><path d="M0 0h19v18H0z" fill="#c61f1c"/><path d="M4 14c1-2 4-3 6-3.300 3-.3 5 0 5 1-1 1-4-.5-5.500-3C8.500 7 8 4 9 4c1.300 0 .5 4-1 6.500S4.500 15 4 14z" fill="none" stroke="#fff" stroke-width="1"/></svg></span>
    <span class="task run"><svg width="22" height="21" viewBox="0 0 22 21"><path d="M9 3l8-3 4 3v13l-7 3-5-3z" fill="#b88f25"/><path d="M9 3l8-3 4 3-7 3z" fill="#f6e38c"/><path d="M9 3l5 3v13l-5-3z" fill="#e6c554"/><path d="M15 8l5-2M15 13l5-2" stroke="#725818"/><circle cx="7" cy="13" r="4.500" fill="#2b8cc1"/><path d="M5 11l4-1-1 5z" fill="#75bd50"/><path d="M0 15l8 1 5-2v4l-5 2-8-2z" fill="#e9c951" stroke="#98751e"/></svg></span>
    <span class="task run active"><svg width="20" height="20"><use href="#arcmap"/></svg></span>
    <div class="tray">
      <svg class="people" viewBox="0 0 14 14"><circle cx="9.500" cy="3" r="2.200"/><path d="M6.500 9c0-5 6-5 6 0"/><circle cx="4" cy="7" r="2.200"/><path d="M1 13c0-5 6-5 6 0"/></svg>
      <svg class="caret" viewBox="0 0 12 12"><path d="M1 8l5-5 5 5"/></svg>
      <svg class="vol" viewBox="0 0 14 12"><path d="M1 4.500h2.500L6 2v8L3.500 7.500H1zM8 4c1 1 1 3 0 4M10 2.500c2 2 2 5 0 7M12 1.500c2 3 2 6 0 9"/></svg>
      <svg class="wifi" viewBox="0 0 14 14"><path d="M1.500 13C2 6 6 2 13 1.500M4 13c.5-5 4-8.500 9-9M6.500 13c.5-3.500 3-6 6.500-6.500M9 13c0-2 2-4 4-4"/><circle cx="12" cy="12" r=".8"/></svg>
      <svg class="batt" viewBox="0 0 15 11"><path d="M5 4h9v5.500H4V7" fill="#fff"/><path d="M1 1v3h4V1M3 4v3h3M14.500 5.500v2"/></svg>
      <div class="clock"><span>12:39 PM</span><span>12/11/2018</span></div>
      <svg class="note" viewBox="0 0 15 15"><path d="M.5.500h14v10.500H9L7.500 14 6 11H.5z" fill="#fff"/><path d="M3 4h9M3 6.500h9" stroke="#555"/></svg>
      <i class="peek"></i>
    </div>
  </footer>

  <figcaption class="caption">
    <div class="cap1">Figure 7a: To open a model in ArcMap or ArcPro you will need to open the Model Builder. You can do</div>
    <div class="cap2"><span>this by clicking on the model builder icon</span><i class="inlineicon"><svg viewBox="0 0 30 28"><defs><linearGradient id="gb" x1="0" y1="0" x2="1" y2="1"><stop offset="0" stop-color="#d8efff"/><stop offset="1" stop-color="#3385d6"/></linearGradient><linearGradient id="gg" x1="0" y1="0" x2="1" y2="1"><stop offset="0" stop-color="#d7eeba"/><stop offset="1" stop-color="#438b18"/></linearGradient></defs><path d="M8 8l4 5-4 6M16 14h5" fill="none" stroke="#444" stroke-width="1.500"/><rect x="1" y=".8" width="7.500" height="8" fill="url(#gb)" stroke="#5b93cb"/><rect x="1" y="19" width="7.500" height="8" fill="url(#gb)" stroke="#5b93cb"/><rect x="10" y="10.500" width="6" height="7" fill="#fce57e" stroke="#8a5c24" stroke-width="1.300"/><rect x="19.500" y="10.300" width="7.500" height="7.500" fill="url(#gg)" stroke="#5c9438"/></svg></i><span>or by using the main menu and selecting</span></div>
    <div class="cap3">Geoprocessing&gt;Model Builder. Once you have done so and empty Model window will appear.</div>
  </figcaption>
</main>
</body>
</html>
```
FILE: styles.css
```css
* { box-sizing: border-box; }
body { margin: 0; background: #fff; font-family: "Open Sans", "Noto Sans", sans-serif; font-size: 10.3px; letter-spacing: -.1px; color: #3a3a3a; }
svg { display: block; flex: none; }
i, b { font-style: normal; font-weight: normal; }
.defs { width: 0; height: 0; position: absolute; }
.desktop { width: 1194px; height: 802px; overflow: hidden; padding: 8px 48px 0 32px; white-space: nowrap; }
.arcmap { height: 595.500px; background: #f1f1f1; display: flex; flex-direction: column; }

.titlebar { height: 24px; flex: none; background: #fff; display: flex; align-items: center; padding: 4px 15px 0 1px; }
.appicon { width: 14px; height: 14px; margin-right: 3px; }
.title { flex: 1; color: #222; font-size: 10.300px; letter-spacing: -.15px; }
.winctl { width: 92px; height: 12px; }
.menubar { height: 20px; flex: none; display: flex; align-items: center; padding: 1px 0 0 7px; gap: 9.500px; font-size: 10.200px; letter-spacing: -.2px; }

.toolrow { display: flex; align-items: center; height: 19.500px; flex: none; }
.row-layout { height: 18px; }
.row-editor { padding: 2px 0 0 716px; }
.toolbar { display: flex; align-items: center; height: 17px; flex: none; background: linear-gradient(#fafafa, #f3f3f3); color: #222; overflow: hidden; }
.dim { color: #b4b4b4; }
.ic { width: 11px; height: 11px; margin: 0 .85px; }
.sep { width: 1px; height: 12px; background: #c9c9c9; margin: 0 1.300px; flex: none; }
.grip { width: 2px; height: 12px; margin: 0 1.700px 0 2px; flex: none; background: repeating-linear-gradient(#bbb 0 1px, transparent 1px 2.500px); }
.dd { width: 0; border: 2px solid transparent; border-top-color: #333; border-bottom: 0; margin: 0 1px; flex: none; }
.dd.gray, .dim .dd { border-top-color: #aaa; }
.dim .dd.dark { border-top-color: #333; }
.more { width: 6px; height: 17px; flex: none; background: linear-gradient(#efefef, #9b9b9b); display: flex; align-items: flex-end; justify-content: center; padding-bottom: 3px; }
.more::after { content: ""; border: 2px solid transparent; border-top-color: #222; border-bottom: 0; }
.pressed { width: 12.700px; height: 13px; border: 1px solid #8db4e0; background: #e6eff9; display: flex; align-items: center; justify-content: center; flex: none; }
.pressed .ic { margin: 0; }
.dim .pressed { border-color: #a9c2dc; background: #e9eef3; color: #999; }
.gray { color: #b8b8b8; }
.navy { color: #48678c; } .green { color: #6c8374; } .slate { color: #687078; } .blue { color: #3c6caf; }
.royal { color: #4d77bb; } .gold { color: #dfb440; } .teal { color: #5aa69a; } .red { color: #b9362f; }
.steel { color: #6b90ab; } .azure { color: #2078d4; } .silver { color: #d8dce0; }
.tb-layout { width: 219px; } .tb-tools { width: 290px; } .tb-georef { width: 264px; padding-left: 3px; } .tb-standard { width: 354px; padding-left: 1px; } .tb-arcpad { width: 182px; padding-left: 3px; } .tb-editor { width: 347px; }
.zoombox, .layerbox, .scalebox { display: flex; align-items: center; justify-content: space-between; flex: none; background: #fff; border: 1px solid #ddd; height: 15px; }
.zoombox { width: 34px; padding: 0 3px 0 1px; margin: 0 2px 0 .5px; }
.zoombox b { background: #2e77cf; color: #174a91; width: 16px; height: 12px; line-height: 12px; font-size: 8.500px; letter-spacing: -.6px; }
.zoombox svg, .layerbox svg, .scalebox svg { width: 8px; height: 8px; color: #777; }
.layerbox { width: 105px; height: 13px; background: #e2e2e2; padding: 2px 3px 0 2px; margin: 0 2px 0 1px; overflow: hidden; }
.layerbox b { font-size: 9.800px; line-height: 11px; letter-spacing: -.28px; }
.scalebox { width: 87px; border-color: #aaa; height: 16px; padding: 0 3px 0 2px; }
.scalebox b { font-family: Roboto, sans-serif; font-size: 9.800px; letter-spacing: -.1px; }
.tlabel { flex: none; font-size: 10.200px; }
.georef { width: 71px; letter-spacing: -.3px; } .arcpad { width: 105px; letter-spacing: -.12px; } .editor { width: 29px; letter-spacing: -.15px; color: #333; }
.move { width: 37px; margin-left: 2px; } .moveto { width: 50px; }

.workspace { display: flex; flex: 1; min-height: 0; padding-top: 2px; }
.panelhead { height: 16px; flex: none; display: flex; align-items: center; gap: 4px; background: linear-gradient(90deg, #c4d2e1, #d8e4f1); padding: 1px 2px 0 2px; }
.panelhead span { flex: 1; font-size: 10.300px; letter-spacing: -.22px; }
.panelhead svg { width: 5px; height: 5px; }
.toc { width: 251px; height: 474.500px; display: flex; flex-direction: column; margin-right: 4px; flex: none; }
.toctools { height: 15.500px; display: flex; align-items: center; flex: none; padding-left: 2px; width: 72px; background: #fafafa; }
.toclist { flex: 1; background: #fff; border: 1px solid #a5a5a5; padding: 3px 0 0 3px; }
.trow { display: flex; align-items: center; height: 14px; }
.box { width: 8px; height: 8px; }
.lay { width: 11px; height: 9px; margin: 0 2px; }
.trow strong { color: #000; font-size: 10px; letter-spacing: -.25px; margin-left: -1px; }
.trow.raster { padding-left: 11px; height: 17px; margin-top: 1px; }
.check { width: 7px; height: 7px; border: 1px solid #666; margin: 0 4px 0 2.500px; flex: none; }
.check svg { width: 5px; height: 5px; }
.sel { background: #2b74d0; color: #e8f1fc; }
.trow .sel { line-height: 14.500px; padding: 0 1px; font-size: 10.200px; letter-spacing: -.35px; }
.trow.value { padding-left: 44px; margin-top: 1px; height: 13px; }
.legend { display: flex; padding: 1px 0 0 28px; }
.ramp { width: 8px; height: 34px; background: linear-gradient(#fff, #000); margin-right: 5px; }
.range { display: flex; flex-direction: column; justify-content: space-between; height: 45px; line-height: 12px; }

.map { position: relative; width: 632px; flex: none; height: 474.500px; border: 1px solid #8d8d8d; border-right: 0; border-bottom: 0; margin-right: 4px; background: #fff; }
.mapmain { display: flex; height: 458px; }
.land { background: #fff; }
.vscroll { width: 13px; background: #f0f0f0; display: flex; flex-direction: column; align-items: center; flex: none; }
.vscroll svg { width: 9px; height: 9px; margin: 3px 0; }
.vscroll i { background: #cbcbcb; width: 13px; flex: 1; }
.mapfoot, .modelfoot, .treefoot { display: flex; align-items: center; background: #f0f0f0; height: 15px; }
.mapfoot > svg { width: 7px; height: 7px; }
.mapfoot .pg { margin: 0 5px 0 4px; }
.mapfoot .rf { margin: 0 8px 0 6px; }
.mapfoot .ps { margin-right: 4px; }
.viewon { width: 15px; height: 14px; background: #bcdcf5; display: flex; align-items: center; justify-content: center; }
.viewon svg { width: 6px; height: 6px; }
.mapfoot svg.arr, .arr { width: 9px; height: 9px; margin: 0 3px; }
.thumb { height: 13px; background: #cbcbcb; }
.mapfoot .thumb { width: 521px; }

.modelwin { position: absolute; left: 34px; top: 5px; width: 535px; height: 375px; border: 1px solid #a5a5a5; background: #f3f3f3; box-shadow: 1px 2px 5px rgba(0,0,0,.3); display: flex; flex-direction: column; }
.modeltitle { height: 25px; flex: none; background: #fff; display: flex; align-items: center; padding: 0 14px 0 6px; }
.mi { width: 15px; height: 15px; margin-right: 2px; }
.modeltitle span { flex: 1; color: #999; font-size: 10.300px; letter-spacing: -.15px; }
.modelmenu { display: flex; align-items: center; height: 22px; gap: 9.500px; padding-left: 7px; flex: none; font-size: 10.200px; letter-spacing: -.2px; }
.modeltools { display: flex; align-items: center; height: 14px; flex: none; padding: 0 0 1px 3px; color: #222; }
.small { width: 9px; height: 9px; margin: 0 1.850px; }
.modelbody { display: flex; flex: 1; border-top: 1px solid #888; }
.canvas { flex: 1; background: #fff; border-left: 1px solid #aaa; }
.modelfoot { height: 14px; flex: none; }
.modelfoot .thumb { width: 488px; }
.resize { width: 7px; height: 7px; margin: 5px 0 0 9px; }
.modelbody .vscroll { width: 15px; }

.catalog { width: 223px; flex: none; display: flex; flex-direction: column; height: 474.500px; }
.cattools { height: 17px; flex: none; display: flex; align-items: center; background: #fafafa; padding-left: 3px; width: 172px; }
.bigdd { width: 0; border: 3px solid transparent; border-top: 4px solid #222; border-bottom: 0; margin: 0 4px; flex: none; }
.bigdd.gr { border-top-color: #777; }
.location { height: 26px; flex: none; display: flex; align-items: center; padding: 2px 0 0 3px; font-size: 9.800px; letter-spacing: -.25px; }
.loclabel { width: 44px; padding-top: 3px; }
.locbox { display: flex; align-items: center; width: 173px; height: 16px; border: 1px solid #aaa; background: #fff; padding: 0 3px 0 1px; }
.locbox .ti { margin-right: 0; }
.locbox b { flex: 1; }
.cv { width: 8px; height: 8px; color: #555; }
.ti { width: 11px; height: 10px; margin: 0 2px; }
.treewrap { flex: 1; min-height: 0; border: 2px solid #a0a0a0; border-right: 0; border-bottom: 0; margin-right: 3px; background: #fff; display: flex; flex-direction: column; }
.treemain { display: flex; flex: 1; min-height: 0; overflow: hidden; }
.tree { list-style: none; margin: 0; padding: 1.500px 0 0 24px; flex: 1; min-width: 0; overflow: hidden; }
.tree li { display: flex; align-items: center; height: 14.500px; font-size: 10.100px; letter-spacing: -.12px; color: #3a3a3a; }
.tree li.kid { padding-left: 11px; }
.tree li.leaf { padding-left: 19px; }
.tree .tight { letter-spacing: -.28px; }
.tree .sel { line-height: 14px; padding: 0 1px; margin-left: -1px; }
.treemain .vscroll { width: 14px; }
.treemain .vscroll svg { margin: 4px 0; }
.treemain .vscroll i { flex: none; height: 127px; margin: 49px 0 auto; }
.treefoot { height: 17px; flex: none; }
.treefoot .thumb { width: 141px; margin-right: 31px; }
.statusbar { height: 18px; flex: none; padding: 3px 0 0 889px; line-height: 15px; border-bottom: 1px solid #8c9a96; }

.taskbar { width: 1114px; height: 34.500px; background: linear-gradient(90deg, #0b0f12, #111a22 35%, #08090b 55%, #0c1014 80%, #101a24); display: flex; }
.task { width: 43.500px; flex: none; display: flex; align-items: center; justify-content: center; }
.task:first-child { width: 42.500px; }
.task.run { border-bottom: 2px solid #6ea7dc; margin: 0 4px; width: 35.500px; padding-top: 2px; }
.task.active { background: #3d4044; width: 42px; margin: 0; }
.tray { flex: 1; display: flex; align-items: center; justify-content: flex-end; padding-right: 2px; }
.tray svg { fill: none; stroke: #ddd; stroke-width: 1.200; }
.people { width: 14px; height: 14px; margin-right: 22px; }
.caret { width: 12px; height: 12px; margin-right: 15px; }
.vol { width: 13px; height: 12px; margin-right: 16px; }
.wifi { width: 13px; height: 13px; margin-right: 13px; }
.batt { width: 15px; height: 11px; margin-right: 10px; }
.clock { display: flex; flex-direction: column; align-items: center; color: #eee; line-height: 16px; width: 56px; margin-right: 12px; font-size: 10.400px; }
.note { width: 15px; height: 15px; }
.note path:first-child { stroke: none; }
.peek { width: 1px; height: 34px; background: #4b5258; margin-left: 18px; }

.caption { width: 1116px; display: flex; flex-direction: column; align-items: center; color: #000; font-family: "Liberation Serif", serif; font-style: italic; font-size: 26.420px; letter-spacing: 0; line-height: 36px; }
.cap1 { margin-top: 10px; height: 36px; }
.cap2 { display: flex; height: 58px; align-items: flex-end; }
.inlineicon { width: 51px; height: 44px; background: #fafafa; margin: 0 4px 8px 18px; padding: 8px 0 0 10px; }
.inlineicon svg { width: 30px; height: 28px; }
.cap3 { height: 36px; }
```
